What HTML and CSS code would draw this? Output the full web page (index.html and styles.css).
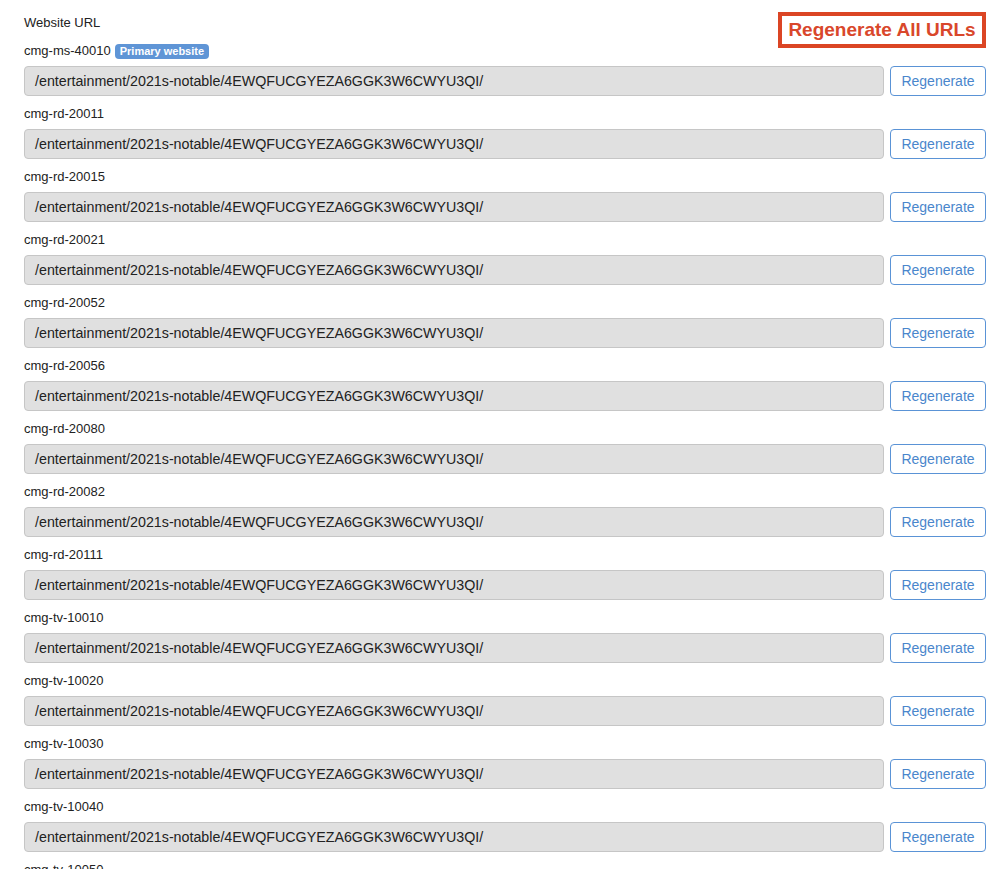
FILE: index.html
```html
<!DOCTYPE html>
<html>
<head>
<meta charset="utf-8">
<link rel="stylesheet" href="styles.css">
</head>
<body>
<div class="page">
  <button class="regen-all">Regenerate All URLs</button>
  <div class="title">Website URL</div>

  <div class="row">
    <div class="label">cmg-ms-40010 <span class="badge">Primary website</span></div>
    <div class="field"><div class="input">/entertainment/2021s-notable/4EWQFUCGYEZA6GGK3W6CWYU3QI/</div><button class="regen">Regenerate</button></div>
  </div>
  <div class="row">
    <div class="label">cmg-rd-20011</div>
    <div class="field"><div class="input">/entertainment/2021s-notable/4EWQFUCGYEZA6GGK3W6CWYU3QI/</div><button class="regen">Regenerate</button></div>
  </div>
  <div class="row">
    <div class="label">cmg-rd-20015</div>
    <div class="field"><div class="input">/entertainment/2021s-notable/4EWQFUCGYEZA6GGK3W6CWYU3QI/</div><button class="regen">Regenerate</button></div>
  </div>
  <div class="row">
    <div class="label">cmg-rd-20021</div>
    <div class="field"><div class="input">/entertainment/2021s-notable/4EWQFUCGYEZA6GGK3W6CWYU3QI/</div><button class="regen">Regenerate</button></div>
  </div>
  <div class="row">
    <div class="label">cmg-rd-20052</div>
    <div class="field"><div class="input">/entertainment/2021s-notable/4EWQFUCGYEZA6GGK3W6CWYU3QI/</div><button class="regen">Regenerate</button></div>
  </div>
  <div class="row">
    <div class="label">cmg-rd-20056</div>
    <div class="field"><div class="input">/entertainment/2021s-notable/4EWQFUCGYEZA6GGK3W6CWYU3QI/</div><button class="regen">Regenerate</button></div>
  </div>
  <div class="row">
    <div class="label">cmg-rd-20080</div>
    <div class="field"><div class="input">/entertainment/2021s-notable/4EWQFUCGYEZA6GGK3W6CWYU3QI/</div><button class="regen">Regenerate</button></div>
  </div>
  <div class="row">
    <div class="label">cmg-rd-20082</div>
    <div class="field"><div class="input">/entertainment/2021s-notable/4EWQFUCGYEZA6GGK3W6CWYU3QI/</div><button class="regen">Regenerate</button></div>
  </div>
  <div class="row">
    <div class="label">cmg-rd-20111</div>
    <div class="field"><div class="input">/entertainment/2021s-notable/4EWQFUCGYEZA6GGK3W6CWYU3QI/</div><button class="regen">Regenerate</button></div>
  </div>
  <div class="row">
    <div class="label">cmg-tv-10010</div>
    <div class="field"><div class="input">/entertainment/2021s-notable/4EWQFUCGYEZA6GGK3W6CWYU3QI/</div><button class="regen">Regenerate</button></div>
  </div>
  <div class="row">
    <div class="label">cmg-tv-10020</div>
    <div class="field"><div class="input">/entertainment/2021s-notable/4EWQFUCGYEZA6GGK3W6CWYU3QI/</div><button class="regen">Regenerate</button></div>
  </div>
  <div class="row">
    <div class="label">cmg-tv-10030</div>
    <div class="field"><div class="input">/entertainment/2021s-notable/4EWQFUCGYEZA6GGK3W6CWYU3QI/</div><button class="regen">Regenerate</button></div>
  </div>
  <div class="row">
    <div class="label">cmg-tv-10040</div>
    <div class="field"><div class="input">/entertainment/2021s-notable/4EWQFUCGYEZA6GGK3W6CWYU3QI/</div><button class="regen">Regenerate</button></div>
  </div>
  <div class="row">
    <div class="label">cmg-tv-10050</div>
    <div class="field"><div class="input">/entertainment/2021s-notable/4EWQFUCGYEZA6GGK3W6CWYU3QI/</div><button class="regen">Regenerate</button></div>
  </div>
</div>
</body>
</html>
```

FILE: styles.css
```css
html, body {
  margin: 0;
  padding: 0;
  background: #ffffff;
}

body {
  font-family: "Liberation Sans", Arial, Helvetica, sans-serif;
  color: #222222;
  overflow: hidden;
}

.page {
  padding: 14px 18px 0 24px;
}

.title {
  font-size: 13px;
  line-height: 18px;
  margin-bottom: 10px;
}

.regen-all {
  float: right;
  margin-top: -2px;
  height: 36px;
  width: 208px;
  box-sizing: border-box;
  border: 4px solid #db4524;
  background: #ffffff;
  color: #d9472b;
  font-family: "Liberation Sans", Arial, Helvetica, sans-serif;
  font-weight: bold;
  font-size: 19px;
  padding: 0;
  line-height: 26px;
}

.row {
  margin-bottom: 9px;
}

.label {
  font-size: 13px;
  line-height: 18px;
  margin-bottom: 6px;
  display: flex;
  align-items: center;
  gap: 4px;
}

.badge {
  background: #5f95d6;
  color: #ffffff;
  font-size: 11px;
  font-weight: bold;
  line-height: 15px;
  padding: 0 5px;
  border-radius: 4px;
}

.field {
  display: flex;
  gap: 6px;
}

.input {
  flex: 1;
  height: 30px;
  box-sizing: border-box;
  background: #e0e0e0;
  border: 1px solid #c6c6c6;
  border-radius: 4px;
  font-size: 14.25px;
  line-height: 28px;
  padding-left: 10px;
  color: #222222;
  white-space: nowrap;
  overflow: hidden;
}

.regen {
  width: 96px;
  height: 30px;
  box-sizing: border-box;
  background: #ffffff;
  border: 1px solid #5a93d6;
  border-radius: 4px;
  color: #4a86cc;
  font-family: "Liberation Sans", Arial, Helvetica, sans-serif;
  font-size: 14px;
  padding: 0;
}
```
